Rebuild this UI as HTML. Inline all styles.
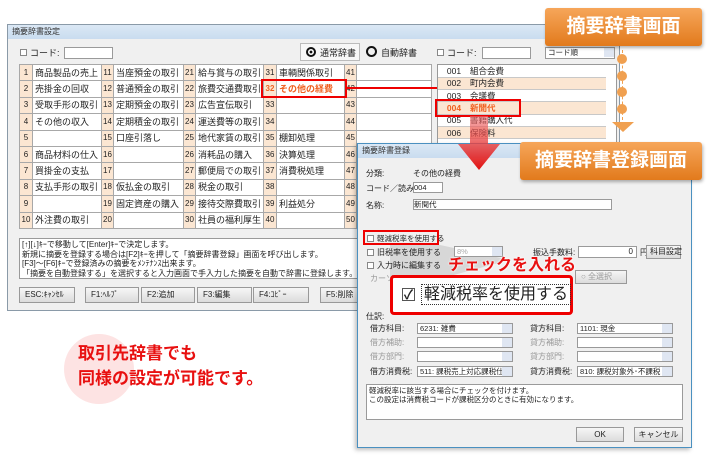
<!DOCTYPE html><html><head><meta charset="utf-8"><style>
*{margin:0;padding:0;box-sizing:border-box}
body{width:710px;height:460px;background:#fff;position:relative;overflow:hidden;font-family:"Liberation Sans","Noto Sans CJK JP",sans-serif;font-size:9px;color:#222}
.a{position:absolute;white-space:nowrap}
.d{font-size:8px}
.win{background:#f0f0f0;border:1px solid #8a9aa8}
.tb{background:linear-gradient(#dbe8f5,#c9dcef);height:14px;font-size:8px;line-height:14px;padding-left:4px;color:#333}
.in{background:#fff;border:1px solid #9a9a9a}
.cb{width:7px;height:7px;border:1px solid #888;background:#fff}
table{border-collapse:collapse;table-layout:fixed}
.g td{border:1px solid #a8a8a8;height:16.4px;font-size:9px;line-height:10px;padding:0 2px;background:#fff;overflow:hidden;white-space:nowrap}
.g td.n{background:#fbe6d2;text-align:center;padding:0;font-size:8px}
.l td{height:12.3px;font-size:8.5px;line-height:10px;padding:0;border-bottom:1px solid #c8c8c8;overflow:hidden;white-space:nowrap}
.btn{background:linear-gradient(#f6f6f6,#dcdcdc);border:1px solid #999;font-size:8px;line-height:14px;padding-left:5px}
.badge{background:linear-gradient(#f6a65a,#e27a1c);color:#fff;font-weight:bold;font-size:19px;border-radius:3px;box-shadow:1px 2px 3px rgba(0,0,0,.3);text-align:center}
.sel{background:#fff;border:1px solid #999;height:11px;font-size:7.5px;line-height:9px;padding-left:2px;overflow:hidden}
.sel:after{content:"";position:absolute;right:0;top:0;width:10px;height:9px;background:#dfe6f2}
.gl{color:#999}
</style></head><body>
<div class="a win" style="left:7px;top:24px;width:613px;height:287px">
<div class="tb">摘要辞書設定</div></div>
<div class="a cb" style="left:20px;top:49px"></div><div class="a" style="left:30px;top:46px">コード:</div>
<div class="a in" style="left:64px;top:47px;width:49px;height:12px"></div>
<div class="a" style="left:300px;top:43px;width:60px;height:18px;border:1px solid #bbb;background:#f7f7f7"></div>
<div class="a" style="left:306px;top:47px;width:10px;height:10px;border:2px solid #111;border-radius:50%;background:radial-gradient(#111 30%,#fff 35%)"></div>
<div class="a" style="left:320px;top:46px">通常辞書</div>
<div class="a" style="left:366px;top:46px;width:11px;height:11px;border:2px solid #111;border-radius:50%"></div>
<div class="a" style="left:381px;top:46px">自動辞書</div>
<div class="a cb" style="left:437px;top:49px"></div><div class="a" style="left:447px;top:46px">コード:</div>
<div class="a in" style="left:482px;top:47px;width:49px;height:12px"></div>
<div class="a sel" style="left:545px;top:47px;width:70px;height:12px">コード順</div>
<table class="a g" style="left:19px;top:64px;width:412px">
<colgroup><col style="width:13px"><col style="width:69px"><col style="width:12px"><col style="width:70px"><col style="width:12px"><col style="width:68px"><col style="width:13px"><col style="width:68px"><col style="width:12px"><col style="width:75px"></colgroup>
<tr><td class="n">1</td><td>商品製品の売上</td><td class="n">11</td><td>当座預金の取引</td><td class="n">21</td><td>給与賞与の取引</td><td class="n">31</td><td>車輌関係取引</td><td class="n">41</td><td></td></tr>
<tr><td class="n">2</td><td>売掛金の回収</td><td class="n">12</td><td>普通預金の取引</td><td class="n">22</td><td>旅費交通費取引</td><td class="n" style="color:#f06020;font-weight:bold">32</td><td style="color:#f06020;font-weight:bold">その他の経費</td><td class="n">42</td><td></td></tr>
<tr><td class="n">3</td><td>受取手形の取引</td><td class="n">13</td><td>定期預金の取引</td><td class="n">23</td><td>広告宣伝取引</td><td class="n">33</td><td></td><td class="n">43</td><td></td></tr>
<tr><td class="n">4</td><td>その他の収入</td><td class="n">14</td><td>定期積金の取引</td><td class="n">24</td><td>運送費等の取引</td><td class="n">34</td><td></td><td class="n">44</td><td></td></tr>
<tr><td class="n">5</td><td></td><td class="n">15</td><td>口座引落し</td><td class="n">25</td><td>地代家賃の取引</td><td class="n">35</td><td>棚卸処理</td><td class="n">45</td><td></td></tr>
<tr><td class="n">6</td><td>商品材料の仕入</td><td class="n">16</td><td></td><td class="n">26</td><td>消耗品の購入</td><td class="n">36</td><td>決算処理</td><td class="n">46</td><td></td></tr>
<tr><td class="n">7</td><td>買掛金の支払</td><td class="n">17</td><td></td><td class="n">27</td><td>郵便局での取引</td><td class="n">37</td><td>消費税処理</td><td class="n">47</td><td></td></tr>
<tr><td class="n">8</td><td>支払手形の取引</td><td class="n">18</td><td>仮払金の取引</td><td class="n">28</td><td>税金の取引</td><td class="n">38</td><td></td><td class="n">48</td><td></td></tr>
<tr><td class="n">9</td><td></td><td class="n">19</td><td>固定資産の購入</td><td class="n">29</td><td>接待交際費取引</td><td class="n">39</td><td>利益処分</td><td class="n">49</td><td></td></tr>
<tr><td class="n">10</td><td>外注費の取引</td><td class="n">20</td><td></td><td class="n">30</td><td>社員の福利厚生</td><td class="n">40</td><td></td><td class="n">50</td><td></td></tr>
</table>
<div class="a" style="left:261px;top:79px;width:86px;height:19px;border:2px solid #e00"></div>
<div class="a" style="left:347px;top:87px;width:132px;height:2px;background:#e00"></div>
<div class="a" style="left:477px;top:87px;width:2px;height:13px;background:#e00"></div>
<div class="a" style="left:437px;top:64px;width:180px;height:82px;background:#fff;border:1px solid #999"></div>
<table class="a l" style="left:438px;top:65px;width:168px">
<colgroup><col style="width:32px"><col style="width:136px"></colgroup>
<tr><td style="text-align:center">001</td><td>組合会費</td></tr>
<tr style="background:#fbe6d2"><td style="text-align:center">002</td><td>町内会費</td></tr>
<tr><td style="text-align:center">003</td><td>会議費</td></tr>
<tr style="background:#fbe6d2;color:#f06020;font-weight:bold"><td style="text-align:center">004</td><td>新聞代</td></tr>
<tr><td style="text-align:center">005</td><td>書籍購入代</td></tr>
<tr style="background:#fbe6d2"><td style="text-align:center">006</td><td>保険料</td></tr>
</table>
<div class="a" style="left:435px;top:99px;width:86px;height:18px;border:2px solid #e00"></div>
<div class="a in" style="left:19px;top:238px;width:430px;height:41px;font-size:8px;line-height:9.5px;padding:1px 2px">[↑][↓]ｷｰで移動して[Enter]ｷｰで決定します。<br>新規に摘要を登録する場合は[F2]ｷｰを押して「摘要辞書登録」画面を呼び出します。<br>[F3]～[F6]ｷｰで登録済みの摘要をﾒﾝﾃﾅﾝｽ出来ます。<br>「摘要を自動登録する」を選択すると入力画面で手入力した摘要を自動で辞書に登録します。</div>
<div class="a btn" style="left:19px;top:287px;width:56px;height:16px">ESC:ｷｬﾝｾﾙ</div>
<div class="a btn" style="left:85px;top:287px;width:54px;height:16px">F1:ﾍﾙﾌﾟ</div>
<div class="a btn" style="left:141px;top:287px;width:54px;height:16px">F2:追加</div>
<div class="a btn" style="left:197px;top:287px;width:55px;height:16px">F3:編集</div>
<div class="a btn" style="left:253px;top:287px;width:56px;height:16px">F4:ｺﾋﾟｰ</div>
<div class="a btn" style="left:320px;top:287px;width:40px;height:16px">F5:削除</div>
<div class="a" style="left:622px;top:50px;height:70px;border-left:1px dashed #f0a050"></div>
<div class="a" style="left:617px;top:54px;width:10px;height:10px;border-radius:50%;background:#f0a050"></div>
<div class="a" style="left:617px;top:71px;width:10px;height:10px;border-radius:50%;background:#f0a050"></div>
<div class="a" style="left:617px;top:87px;width:10px;height:10px;border-radius:50%;background:#f0a050"></div>
<div class="a" style="left:617px;top:104px;width:10px;height:10px;border-radius:50%;background:#f0a050"></div>
<div class="a" style="left:612px;top:122px;border-left:11px solid transparent;border-right:11px solid transparent;border-top:10px solid #f0a050"></div>
<div class="a badge" style="left:545px;top:8px;width:157px;height:38px;line-height:38px">摘要辞書画面</div>
<div class="a" style="left:64px;top:334px;width:70px;height:70px;border-radius:50%;background:#fde3e3"></div>
<div class="a" style="left:78px;top:341px;color:#e81010;font-weight:bold;font-size:17px;line-height:25px">取引先辞書でも<br>同様の設定が可能です。</div>
<div class="a win" style="left:357px;top:143px;width:335px;height:305px;border-color:#4a90c0;box-shadow:-2px 2px 4px rgba(0,0,0,.25)"><div class="tb">摘要辞書登録</div></div>
<div class="a d" style="left:366px;top:168px">分類:</div><div class="a d" style="left:413px;top:168px">その他の経費</div>
<div class="a d" style="left:366px;top:183px">コード／読み:</div><div class="a in" style="left:413px;top:182px;width:30px;height:11px;font-size:7.5px;line-height:9px">004</div>
<div class="a d" style="left:366px;top:200px">名称:</div><div class="a in" style="left:413px;top:199px;width:199px;height:11px;font-size:7.5px;line-height:9px">新聞代</div>
<svg class="a" style="left:390px;top:240px" width="200" height="80"><polygon points="0,5 50,5 120,20 60,36 0,38" fill="#ccc" opacity=".7"/></svg>
<div class="a" style="left:363px;top:230px;width:76px;height:15px;border:2px solid #e00;background:#f0f0f0"></div>
<div class="a cb" style="left:367px;top:235px"></div><div class="a" style="left:377px;top:233px;font-size:7.5px">軽減税率を使用する</div>
<div class="a cb" style="left:367px;top:249px"></div><div class="a d" style="left:377px;top:247px">旧税率を使用する</div>
<div class="a cb" style="left:367px;top:262px"></div><div class="a d" style="left:377px;top:260px">入力時に編集する</div>
<div class="a gl d" style="left:370px;top:273px">カーソル</div>
<div class="a sel" style="left:454px;top:246px;width:49px;color:#aaa">8%</div>
<div class="a d" style="left:533px;top:247px">振込手数料:</div>
<div class="a in" style="left:578px;top:246px;width:59px;height:12px;text-align:right;padding-right:3px;line-height:10px;font-size:8px">0</div><div class="a d" style="left:640px;top:247px">円</div>
<div class="a btn" style="left:646px;top:245px;width:35px;height:14px;line-height:12px;padding-left:3px">科目設定</div>
<div class="a btn" style="left:575px;top:270px;width:52px;height:14px;line-height:12px;color:#999">○ 全選択</div>
<div class="a" style="left:390px;top:275px;width:183px;height:40px;border:3px solid #e00;border-radius:4px;background:#fff"></div>
<div class="a" style="left:402px;top:288px;width:13px;height:13px;border:1px solid #555;background:#fff;font-size:13px;line-height:11px;font-weight:bold;text-align:center">✓</div>
<div class="a" style="left:421px;top:284px;border:1px dotted #333;font-size:16px;line-height:19px;padding:0 2px">軽減税率を使用する</div>
<div class="a" style="left:448px;top:251px;color:#e81010;font-weight:bold;font-size:16px;text-shadow:0 0 2px #fff,0 0 2px #fff">チェックを入れる</div>
<div class="a d" style="left:366px;top:311px">仕訳:</div>
<div class="a d" style="left:370px;top:323px">借方科目:</div><div class="a sel" style="left:417px;top:323px;width:96px">6231: 雑費</div>
<div class="a gl d" style="left:370px;top:337px">借方補助:</div><div class="a sel" style="left:417px;top:337px;width:96px"></div>
<div class="a gl d" style="left:370px;top:351px">借方部門:</div><div class="a sel" style="left:417px;top:351px;width:96px"></div>
<div class="a d" style="left:370px;top:366px">借方消費税:</div><div class="a sel" style="left:417px;top:366px;width:96px">511: 課税売上対応課税仕入</div>
<div class="a d" style="left:530px;top:323px">貸方科目:</div><div class="a sel" style="left:577px;top:323px;width:96px">1101: 現金</div>
<div class="a gl d" style="left:530px;top:337px">貸方補助:</div><div class="a sel" style="left:577px;top:337px;width:96px"></div>
<div class="a gl d" style="left:530px;top:351px">貸方部門:</div><div class="a sel" style="left:577px;top:351px;width:96px"></div>
<div class="a d" style="left:530px;top:366px">貸方消費税:</div><div class="a sel" style="left:577px;top:366px;width:96px">810: 課税対象外･不課税</div>
<div class="a in" style="left:366px;top:384px;width:317px;height:36px;font-size:7.5px;line-height:9px;padding:1px 2px">軽減税率に該当する場合にチェックを付けます。<br>この設定は消費税コードが課税区分のときに有効になります。</div>
<div class="a btn" style="left:576px;top:427px;width:48px;height:15px;text-align:center;padding:0">OK</div>
<div class="a btn" style="left:634px;top:427px;width:49px;height:15px;text-align:center;padding:0">キャンセル</div>
<svg class="a" style="left:456px;top:116px" width="46" height="56"><defs><linearGradient id="r" x1="0" y1="0" x2="0" y2="1"><stop offset="0" stop-color="#f07070" stop-opacity=".6"/><stop offset="1" stop-color="#e01010"/></linearGradient></defs><polygon points="14,0 32,0 32,28 44,28 23,54 2,28 14,28" fill="url(#r)"/></svg>
<div class="a badge" style="left:520px;top:142px;width:182px;height:38px;line-height:38px">摘要辞書登録画面</div>
</body></html>
